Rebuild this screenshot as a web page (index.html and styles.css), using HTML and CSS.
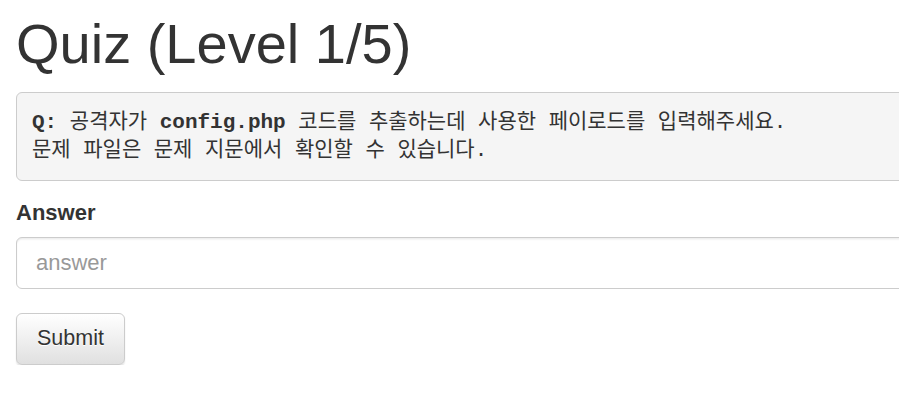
FILE: index.html
```html
<!DOCTYPE html>
<html lang="ko">
<head>
<meta charset="utf-8">
<title>Quiz</title>
<link rel="stylesheet" href="styles.css">
</head>
<body>
<div class="container">
  <h1 class="title">Quiz (Level 1/5)</h1>
  <pre class="question"><b>Q:</b> 공격자가 <b>config.php</b> 코드를 추출하는데 사용한 페이로드를 입력해주세요.
문제 파일은 문제 지문에서 확인할 수 있습니다.</pre>
  <form class="quiz-form" onsubmit="return false;">
    <div class="form-group">
      <label class="label" for="answer">Answer</label>
      <input class="input" id="answer" type="text" placeholder="answer">
    </div>
    <button class="btn" type="submit">Submit</button>
  </form>
</div>
</body>
</html>
```

FILE: styles.css
```css
html, body {
  margin: 0;
  padding: 0;
  overflow: hidden;
  background: #fff;
}

body {
  font-family: "Liberation Sans", Arial, sans-serif;
  font-size: 22px;
  color: #333;
}

.container {
  width: 1140px;
  padding: 0 16px;
}

.title {
  font-family: "Liberation Sans", Arial, sans-serif;
  font-weight: 400;
  font-size: 56px;
  line-height: 1.1;
  color: #333;
  margin: 13px 0 17px 0;
}

.question {
  margin: 0 0 17px 0;
  padding: 16px 15px 15px 15px;
  background: #f5f5f5;
  border: 1px solid #ccc;
  border-radius: 6px;
  font-family: "Liberation Mono", "Noto Sans CJK KR", monospace;
  font-size: 21px;
  line-height: 28px;
  color: #333;
  white-space: pre;
}

.question b {
  font-weight: 700;
}

.quiz-form {
  display: flex;
  flex-direction: column;
  align-items: flex-start;
}

.form-group {
  display: flex;
  flex-direction: column;
  align-self: stretch;
  margin-bottom: 24px;
}

.label {
  font-weight: 700;
  font-size: 22px;
  line-height: 30px;
  margin-bottom: 9px;
}

.input {
  box-sizing: border-box;
  height: 52px;
  padding: 0 19px;
  border: 1px solid #ccc;
  border-radius: 6px;
  box-shadow: inset 0 1.5px 1.5px rgba(0, 0, 0, 0.075);
  font-family: "Liberation Sans", Arial, sans-serif;
  font-size: 22px;
  color: #555;
  background: #fff;
  outline: none;
}

.input::placeholder {
  color: #999;
}

.btn {
  box-sizing: border-box;
  height: 52px;
  padding: 0 20px;
  border: 1px solid #ccc;
  border-radius: 6px;
  background: linear-gradient(to bottom, #fff 0%, #e0e0e0 100%);
  box-shadow: inset 0 1px 0 rgba(255, 255, 255, 0.15), 0 1.5px 1.5px rgba(0, 0, 0, 0.1);
  text-shadow: 0 1px 0 #fff;
  font-family: "Liberation Sans", Arial, sans-serif;
  font-size: 21.5px;
  color: #333;
  cursor: pointer;
}
```
